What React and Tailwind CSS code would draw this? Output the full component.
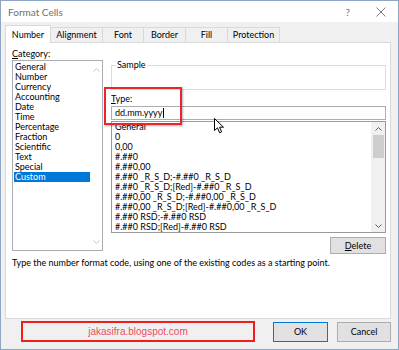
import React from "react";

const categories = ["General","Number","Currency","Accounting","Date","Time","Percentage","Fraction","Scientific","Text","Special","Custom"];
const formats = [
  "General","0","0,00","#.##0","#.##0,00",
  "#.##0 _R_S_D;-#.##0 _R_S_D",
  "#.##0 _R_S_D;[Red]-#.##0 _R_S_D",
  "#.##0,00 _R_S_D;-#.##0,00 _R_S_D",
  "#.##0,00 _R_S_D;[Red]-#.##0,00 _R_S_D",
  "#.##0 RSD;-#.##0 RSD",
  "#.##0 RSD;[Red]-#.##0 RSD",
];

function Up({ c = "#606060" }) {
  return (
    <svg width="7" height="4" viewBox="0 0 7 4"><path d="M0.5 3.5 L3.5 0.5 L6.5 3.5" stroke={c} fill="none" strokeWidth="1" /></svg>
  );
}
function Down({ c = "#606060" }) {
  return (
    <svg width="7" height="4" viewBox="0 0 7 4"><path d="M0.5 0.5 L3.5 3.5 L6.5 0.5" stroke={c} fill="none" strokeWidth="1" /></svg>
  );
}

export default function App() {
  return (
    <div className="relative w-[399px] h-[350px] bg-[#f0f0f0] border border-[#8fa5c4] flex flex-col font-['Lato',sans-serif] text-[9px] leading-[10px] text-black overflow-hidden">
      {/* title bar */}
      <div className="h-[21px] bg-white flex items-center pl-[7px] pr-[12px] shrink-0">
        <span className="text-[10px] text-[#707070]">Format Cells</span>
        <span className="ml-auto text-[10px] text-[#707070] mr-[26px]">?</span>
        <svg width="10" height="10" viewBox="0 0 10 10"><path d="M0.5 0.5 L9.5 9.5 M9.5 0.5 L0.5 9.5" stroke="#707070" strokeWidth="0.9" /></svg>
      </div>

      {/* tabs */}
      <div className="mt-[3px] ml-[4px] flex items-end h-[17px] relative z-10">
        <div className="h-[18px] w-[46px] bg-white border border-b-0 border-[#d9d9d9] flex items-center justify-center -mb-px">Number</div>
        <div className="h-[15px] w-[52px] border border-l-0 border-b-0 border-[#d9d9d9] flex items-center justify-center">Alignment</div>
        <div className="h-[15px] w-[41px] border border-l-0 border-b-0 border-[#d9d9d9] flex items-center justify-center">Font</div>
        <div className="h-[15px] w-[42px] border border-l-0 border-b-0 border-[#d9d9d9] flex items-center justify-center">Border</div>
        <div className="h-[15px] w-[42px] border border-l-0 border-b-0 border-[#d9d9d9] flex items-center justify-center">Fill</div>
        <div className="h-[15px] w-[52px] border border-l-0 border-b-0 border-[#d9d9d9] flex items-center justify-center">Protection</div>
      </div>

      {/* panel */}
      <div className="ml-[4px] w-[386px] h-[277px] bg-white border border-[#d9d9d9] pt-[6px] pl-[6px] pr-[3px] flex flex-col shrink-0">
        <div className="flex items-start">
          {/* left column */}
          <div className="w-[91px] flex flex-col">
            <div className="h-[10px]"><span className="underline">C</span>ategory:</div>
            <div className="mt-[1px] h-[191px] border border-[#abadb3] flex">
              <div className="flex-1 pt-[1px] pl-[1px]">
                {categories.map((c) => (
                  <div key={c} className={"h-[10px] pl-[1px] " + (c === "Custom" ? "bg-[#0078d7] text-white" : "")}>{c}</div>
                ))}
              </div>
              <div className="w-[12px] flex flex-col items-center justify-between pt-[7px] pb-[6px]">
                <Up c="#c2c2c2" />
                <Down c="#c2c2c2" />
              </div>
            </div>
          </div>

          {/* right column */}
          <div className="ml-[8px] w-[275px] flex flex-col">
            <div className="mt-[16px] h-[25px] border border-[#dcdcdc] relative">
              <span className="absolute left-[4px] -top-[6px] bg-white px-[1px]">Sample</span>
            </div>
            <div className="mt-[4px] h-[10px]"><span className="underline">T</span>ype:</div>
            <div className="mt-[2px] h-[14px] border border-[#abadb3] flex items-center pl-[3px]">
              dd.mm.yyyy<span className="ml-[1px] w-px h-[10px] bg-black"></span>
            </div>
            <div className="mt-[1px] h-[112px] border border-[#9a9a9a] flex">
              <div className="flex-1 pl-[3px] overflow-hidden">
                {formats.map((f) => (
                  <div key={f} className="h-[10px] whitespace-nowrap">{f}</div>
                ))}
              </div>
              <div className="w-[14px] bg-[#f0f0f0] flex flex-col items-center">
                <div className="h-[13px] flex items-center"><Up /></div>
                <div className="w-[11px] h-[23px] bg-[#cdcdcd]"></div>
                <div className="mt-auto h-[12px] flex items-center"><Down /></div>
              </div>
            </div>
            <div className="mt-[4px] self-end h-[17px] w-[56px] bg-[#e1e1e1] border border-[#adadad] flex items-center justify-center">
              <span><span className="underline">D</span>elete</span>
            </div>
          </div>
        </div>
        <div className="mt-[4px] h-[10px]">Type the number format code, using one of the existing codes as a starting point.</div>
      </div>

      {/* bottom row */}
      <div className="flex items-start">
        <div className="ml-[20px] mt-[2px] w-[234px] h-[21px] border-2 border-[#f21c1c] flex items-center justify-center text-[10px] text-[#f04a64] font-['Liberation_Sans',sans-serif]">
          jakasifra.blogspot.com
        </div>
        <div className="ml-[18px] mt-[3px] w-[55px] h-[20px] bg-[#e1e1e1] border border-[#0078d7] flex items-center justify-center">OK</div>
        <div className="ml-[9px] mt-[3px] w-[54px] h-[20px] bg-[#e1e1e1] border border-[#adadad] flex items-center justify-center">Cancel</div>
      </div>

      {/* red highlight around Type */}
      <div className="absolute left-[103px] top-[86px] w-[78px] h-[38px] border-2 border-[#e8262b] shadow-[1px_1px_2px_rgba(0,0,0,0.3)] pointer-events-none"></div>

      {/* mouse cursor */}
      <svg className="absolute left-[213px] top-[117px]" width="11" height="16" viewBox="0 0 11 16">
        <path d="M0.5 0.5 L0.5 12.5 L3.5 9.8 L5.6 14.8 L7.6 13.9 L5.6 9.2 L9.5 9.2 Z" fill="white" stroke="black" strokeWidth="1" strokeLinejoin="miter" />
      </svg>
    </div>
  );
}
